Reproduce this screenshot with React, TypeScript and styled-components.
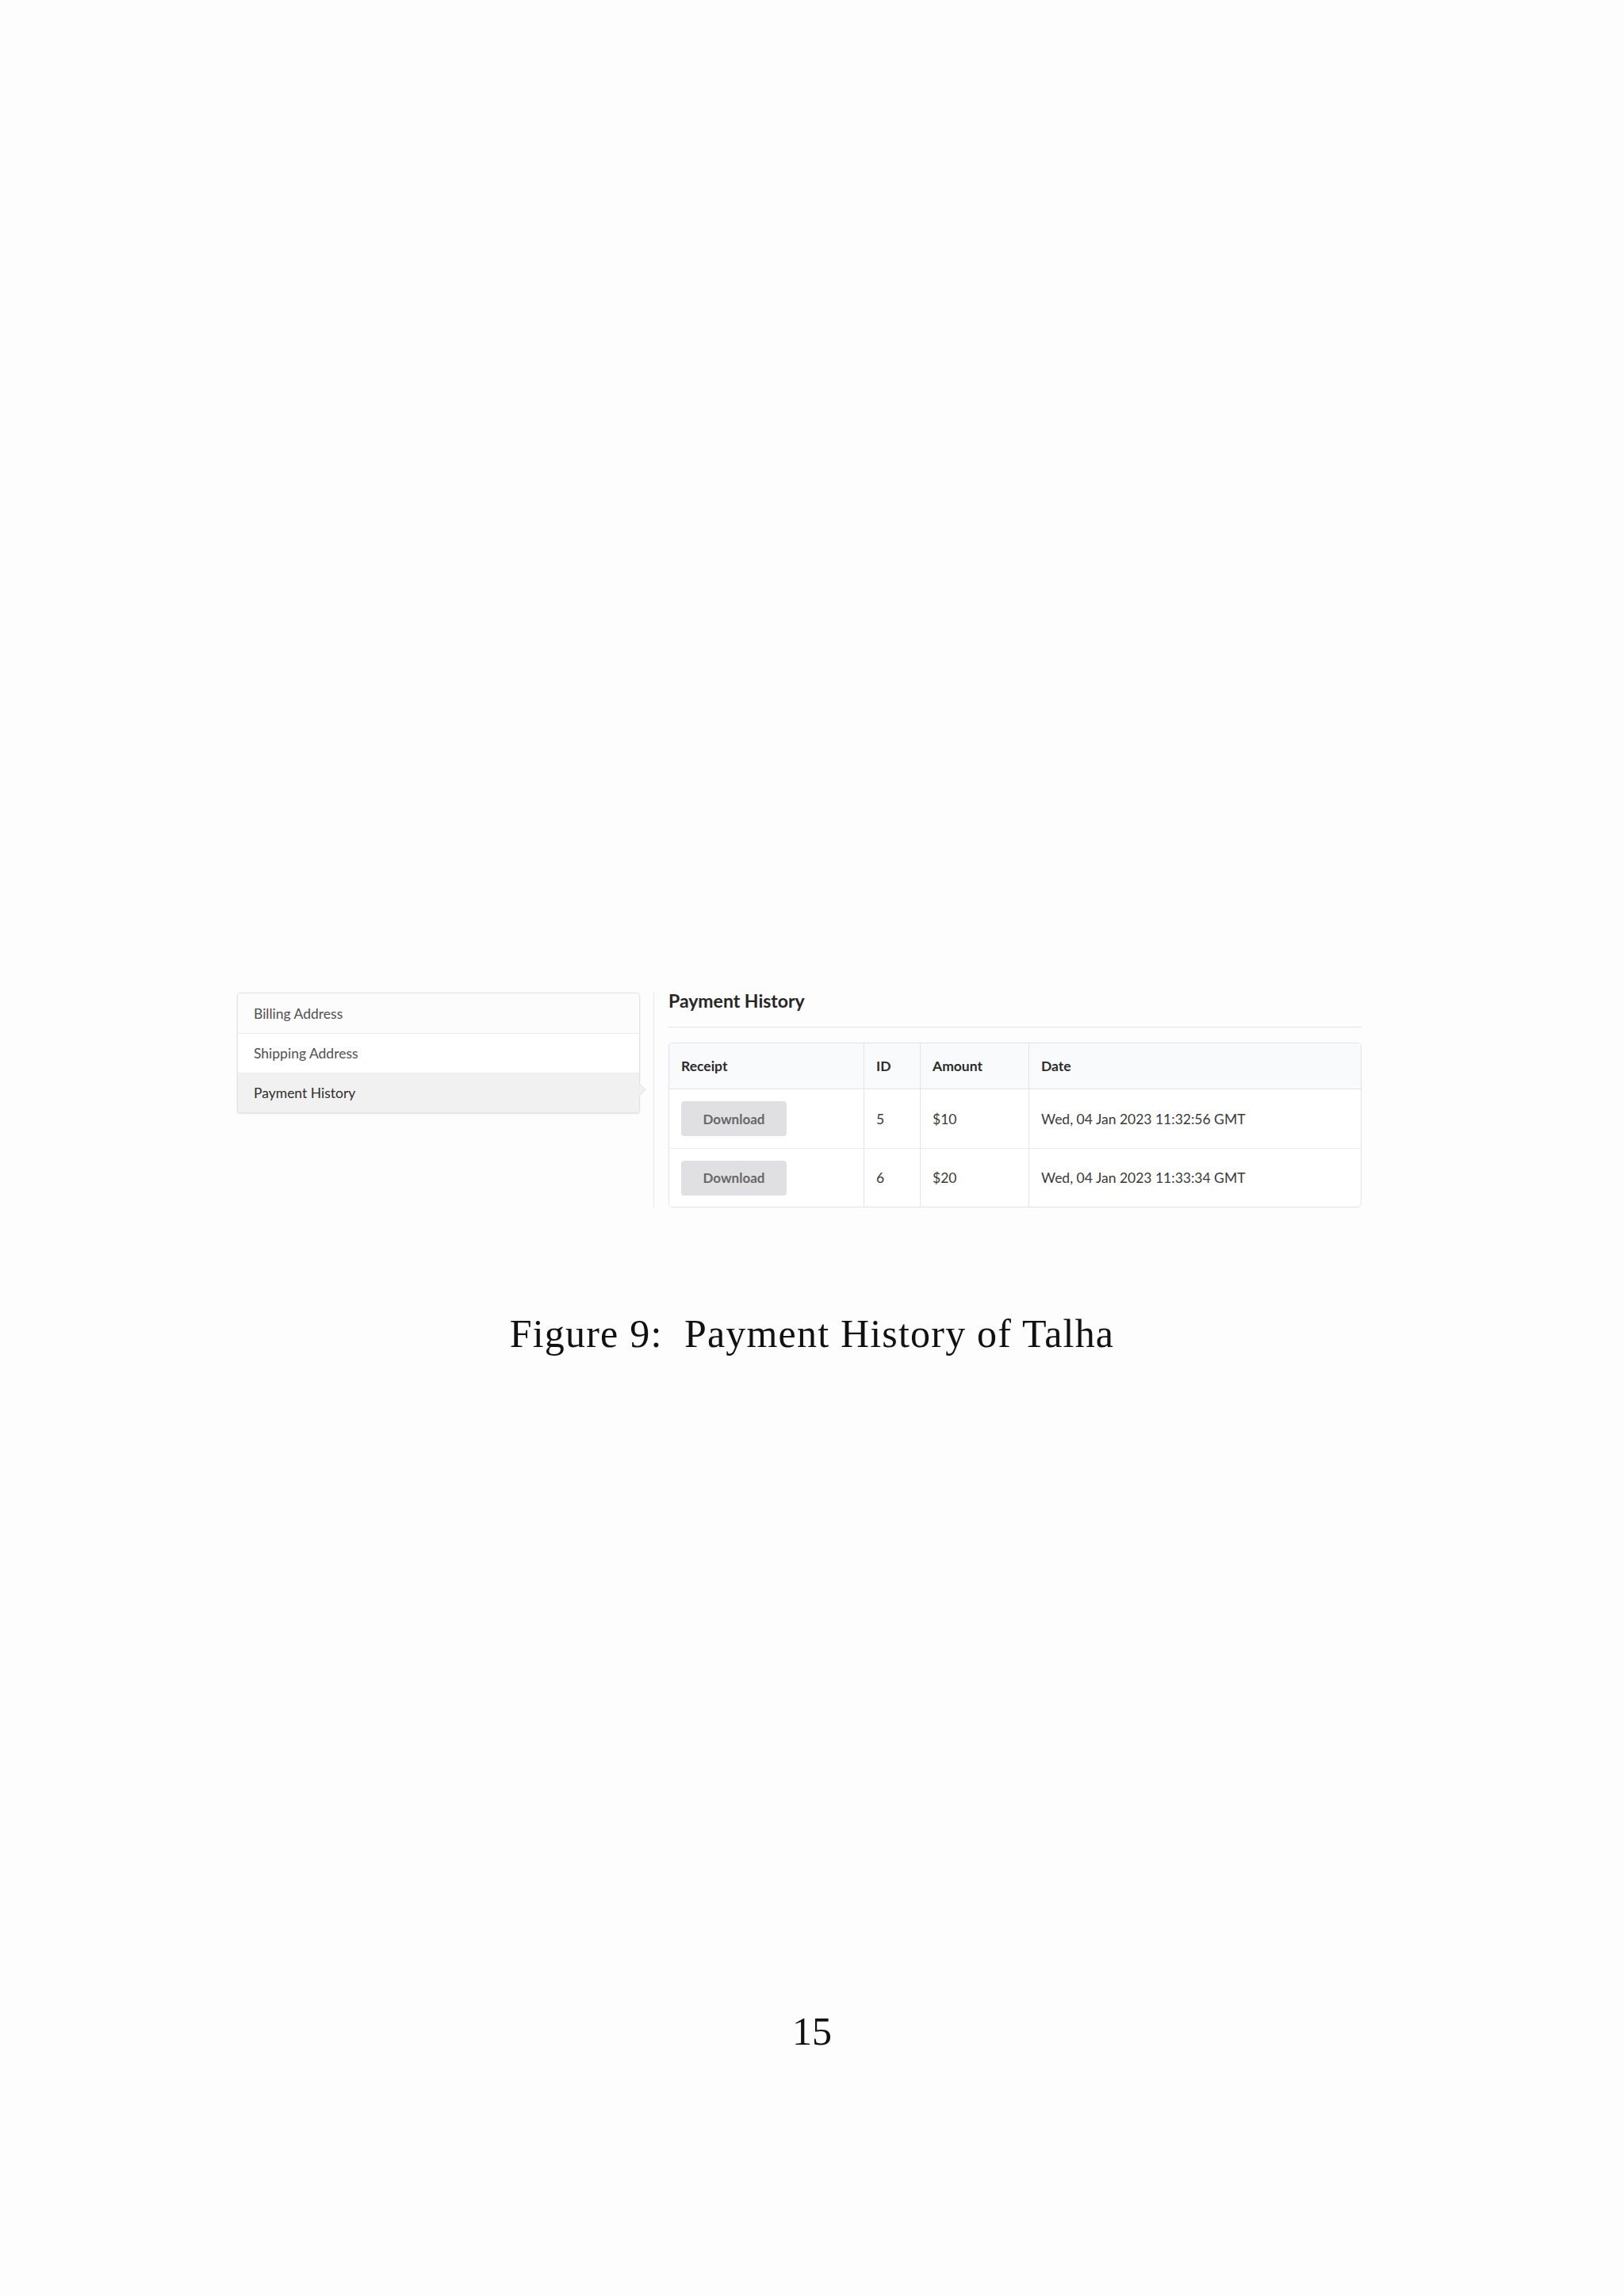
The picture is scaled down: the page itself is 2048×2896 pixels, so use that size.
import React from 'react';
import styled, { createGlobalStyle } from 'styled-components';

const GlobalStyle = createGlobalStyle`
  html, body {
    margin: 0;
    padding: 0;
    background: #fdfdfd;
  }
  * {
    box-sizing: border-box;
  }
`;

const Page = styled.div`
  width: 2048px;
  height: 2896px;
  overflow: hidden;
  background: #fdfdfd;
  display: flex;
  flex-direction: column;
  align-items: center;
`;

const Figure = styled.div`
  align-self: flex-start;
  margin: 1252px 0 0 299px;
  width: 1417px;
  display: flex;
  align-items: flex-start;
  font-family: Lato, "Open Sans", sans-serif;
`;

const Menu = styled.div`
  width: 508px;
  flex-shrink: 0;
  border: 1px solid #e2e2e4;
  border-radius: 4px;
  box-shadow: 0 1px 2px rgba(34, 36, 38, 0.12);
  background: #fff;
`;

const MenuItem = styled.div<{ $active?: boolean; $tint?: boolean }>`
  position: relative;
  height: 50px;
  display: flex;
  align-items: center;
  padding-left: 20px;
  font-size: 17.5px;
  color: ${p => (p.$active ? '#2e2e2e' : '#505050')};
  background: ${p => (p.$active ? '#f1f1f2' : p.$tint ? '#fcfcfc' : '#fff')};
  border-top: 1px solid #ececee;

  &:first-child {
    border-top: none;
    border-radius: 4px 4px 0 0;
  }
  &:last-child {
    border-radius: 0 0 4px 4px;
  }

  ${p =>
    p.$active &&
    `
    &::after {
      content: '';
      position: absolute;
      right: -6px;
      top: 50%;
      width: 10px;
      height: 10px;
      margin-top: -10px;
      background: #f1f1f2;
      border-top: 1px solid #e2e2e4;
      border-right: 1px solid #e2e2e4;
      transform: rotate(45deg);
    }
  `}
`;

const Content = styled.div`
  margin-left: 17px;
  margin-top: -2px;
  padding-left: 18px;
  border-left: 1px solid #e8e8ea;
  flex: 1;
`;

const Heading = styled.h2`
  margin: 0;
  font-size: 23px;
  line-height: 24px;
  font-weight: 700;
  color: #262626;
  padding-bottom: 21px;
  border-bottom: 1px solid #e6e6e8;
`;

const Table = styled.table`
  margin-top: 19px;
  width: 872px;
  border: 1px solid #e2e2e4;
  border-radius: 5px;
  border-collapse: separate;
  border-spacing: 0;
  table-layout: fixed;
  overflow: hidden;
  font-size: 17.5px;
  color: #333;
`;

const HeadCell = styled.th<{ $w: number }>`
  width: ${p => p.$w}px;
  height: 58px;
  padding: 0 15px;
  text-align: left;
  font-weight: 700;
  color: #2b2b2b;
  background: #f9fafb;
  border-bottom: 1px solid #e4e4e6;
  border-left: 1px solid #e4e4e6;

  &:first-child {
    border-left: none;
  }
`;

const Cell = styled.td`
  height: 74px;
  padding: 0 15px;
  background: #fff;
  color: #3a3a3a;
  border-left: 1px solid #e4e4e6;
  border-top: 1px solid #ececee;

  &:first-child {
    border-left: none;
  }
  tr:first-child > & {
    border-top: none;
  }
`;

const DownloadButton = styled.button`
  width: 133px;
  height: 44px;
  border: none;
  border-radius: 4px;
  background: #e0e0e2;
  color: #676767;
  font-family: Lato, "Open Sans", sans-serif;
  font-weight: 700;
  font-size: 17px;
  cursor: pointer;
`;

const Caption = styled.div`
  margin-top: 134px;
  font-family: "Liberation Serif", "Times New Roman", serif;
  font-size: 50px;
  line-height: 50px;
  letter-spacing: 1.2px;
  color: #111;
`;

const PageNumber = styled.div`
  margin-top: 830px;
  font-family: "Liberation Serif", "Times New Roman", serif;
  font-size: 50px;
  line-height: 50px;
  color: #111;
`;

interface Payment {
  id: number;
  amount: string;
  date: string;
}

const payments: Payment[] = [
  { id: 5, amount: '$10', date: 'Wed, 04 Jan 2023 11:32:56 GMT' },
  { id: 6, amount: '$20', date: 'Wed, 04 Jan 2023 11:33:34 GMT' },
];

const App: React.FC = () => {
  return (
    <Page>
      <GlobalStyle />
      <Figure>
        <Menu>
          <MenuItem $tint>Billing Address</MenuItem>
          <MenuItem>Shipping Address</MenuItem>
          <MenuItem $active>Payment History</MenuItem>
        </Menu>

        <Content>
          <Heading>Payment History</Heading>
          <Table>
            <thead>
              <tr>
                <HeadCell $w={245}>Receipt</HeadCell>
                <HeadCell $w={71}>ID</HeadCell>
                <HeadCell $w={137}>Amount</HeadCell>
                <HeadCell $w={419}>Date</HeadCell>
              </tr>
            </thead>
            <tbody>
              {payments.map(p => (
                <tr key={p.id}>
                  <Cell>
                    <DownloadButton>Download</DownloadButton>
                  </Cell>
                  <Cell>{p.id}</Cell>
                  <Cell>{p.amount}</Cell>
                  <Cell>{p.date}</Cell>
                </tr>
              ))}
            </tbody>
          </Table>
        </Content>
      </Figure>

      <Caption>Figure 9:&nbsp; Payment History of Talha</Caption>
      <PageNumber>15</PageNumber>
    </Page>
  );
};

export default App;
